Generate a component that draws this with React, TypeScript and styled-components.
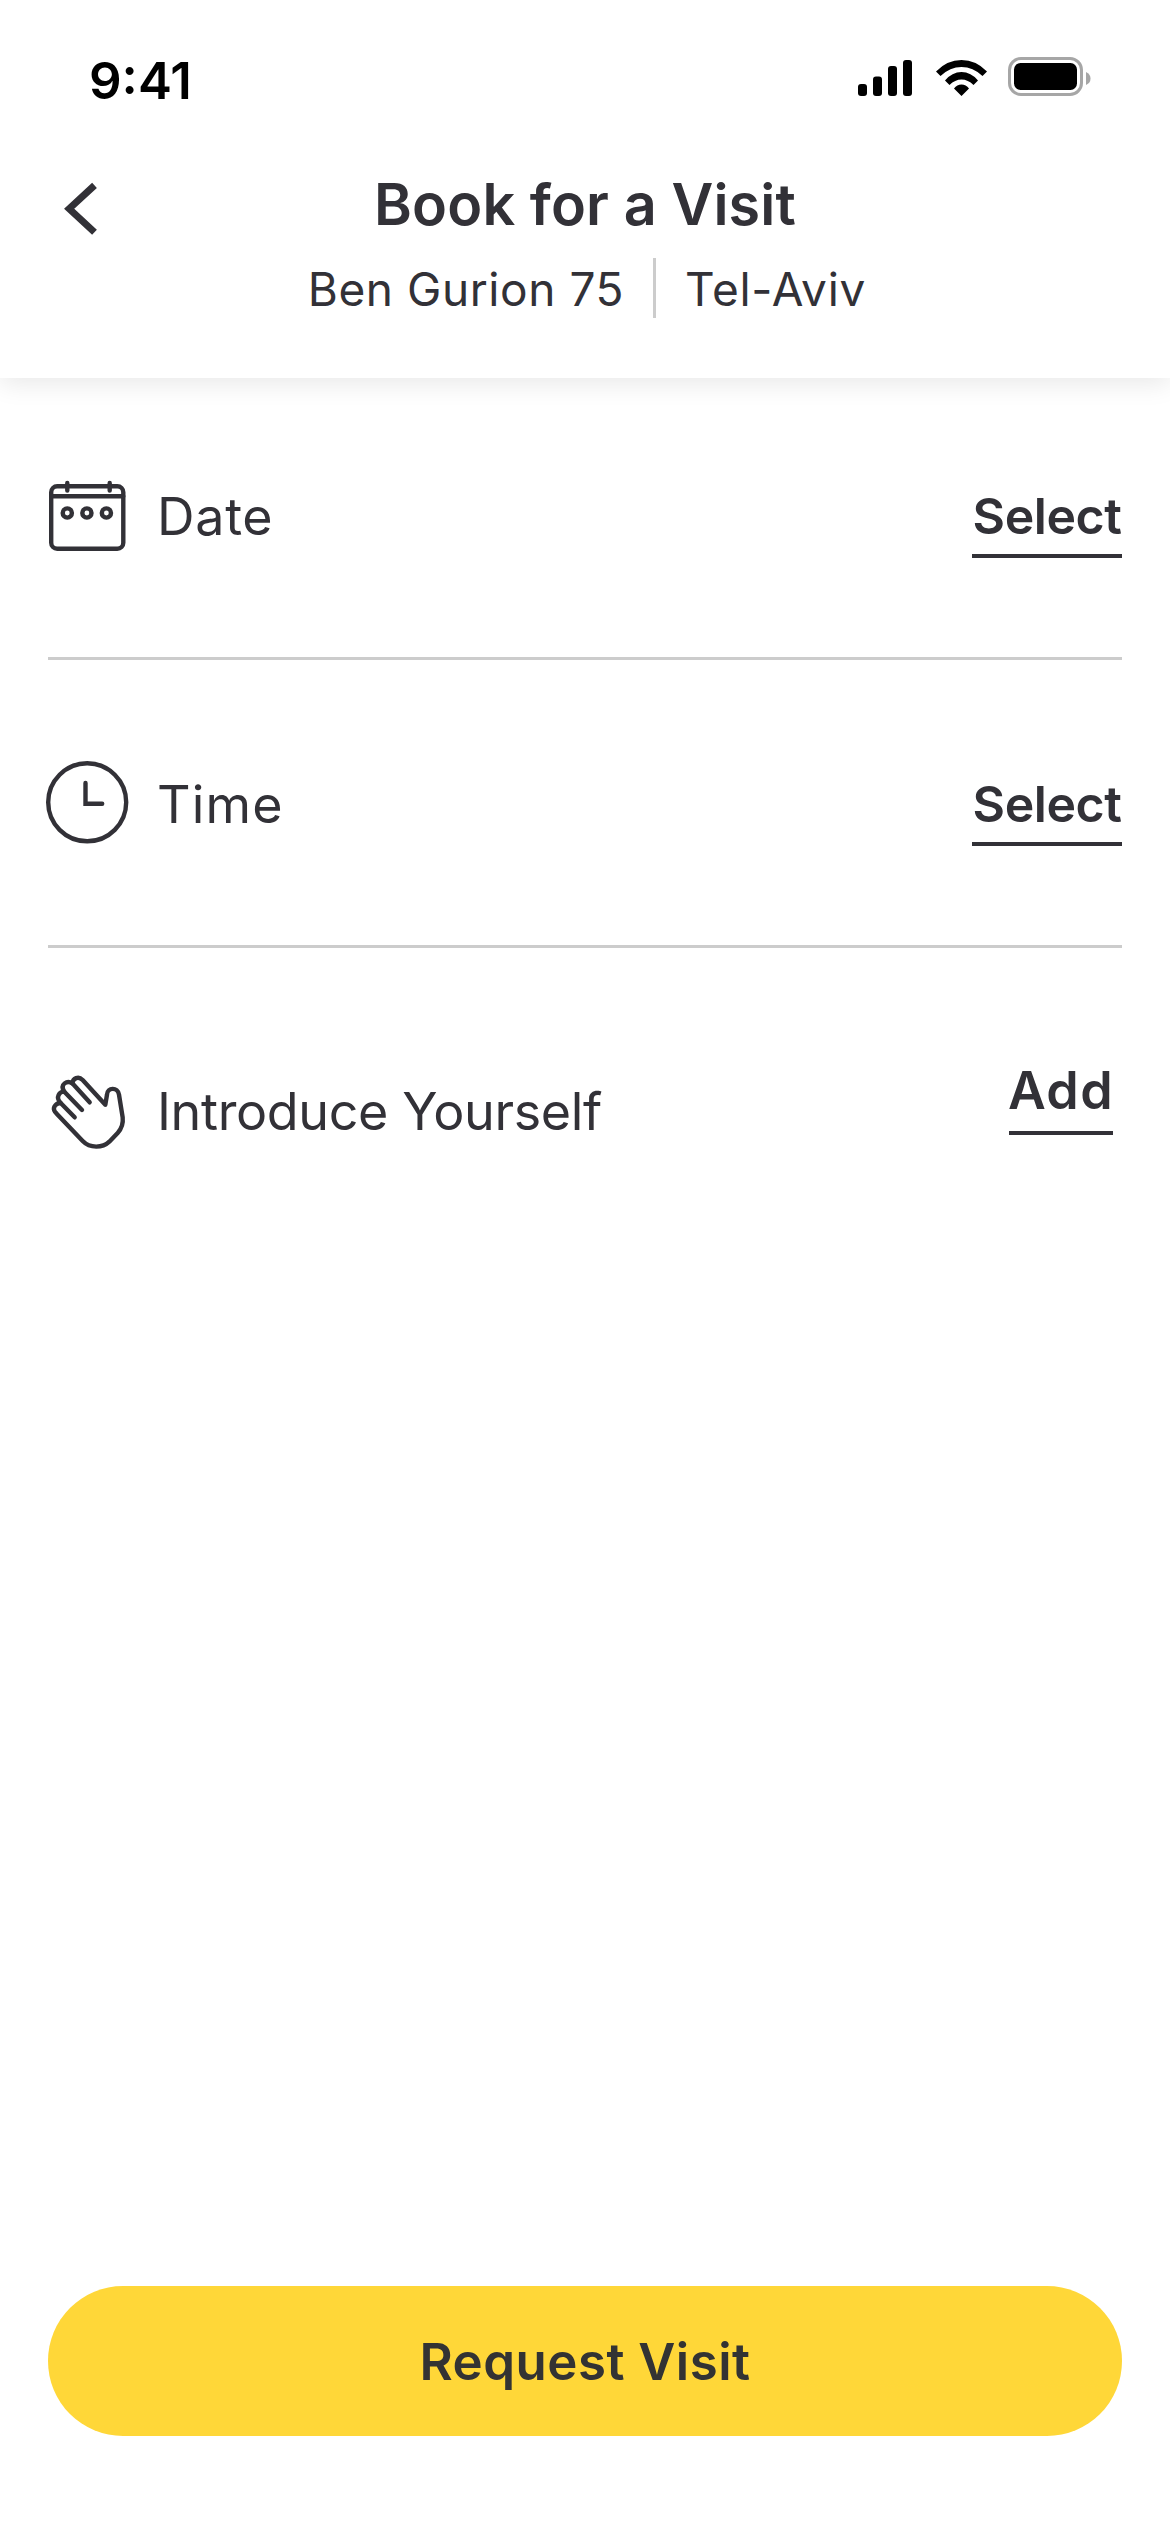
import React from "react";
import styled, { createGlobalStyle } from "styled-components";

const ink = "#323137";

const GlobalStyle = createGlobalStyle`
  * { box-sizing: border-box; }
  body { margin: 0; background: #fff; }
  button { border: 0; padding: 0; margin: 0; background: none; font: inherit; color: inherit; }
`;

const Screen = styled.div`
  width: 1170px;
  height: 2532px;
  display: flex;
  flex-direction: column;
  background: #fff;
  color: ${ink};
  font-family: Inter, "Liberation Sans", sans-serif;
  overflow: hidden;
`;

const Header = styled.header`
  height: 378px;
  flex: none;
  display: flex;
  flex-direction: column;
  background: #fff;
  box-shadow: 0 6px 24px rgba(0, 0, 0, 0.09);
`;

const StatusBar = styled.div`
  height: 132px;
  padding: 51px 79px 0 89px;
  display: flex;
  justify-content: space-between;
  align-items: flex-start;
  color: #000;
`;

const Clock = styled.span`
  font-size: 51px;
  line-height: 60px;
  font-weight: 600;
`;

const StatusIcons = styled.svg`
  display: block;
  margin-top: 6px;
`;

const TitleBar = styled.div`
  display: grid;
  grid-template-columns: 120px 1fr 120px;
  padding-top: 37px;
`;

const BackButton = styled.button`
  height: 79px;
  padding-left: 63px;
  display: flex;
  align-items: center;
`;

const Heading = styled.div`
  display: flex;
  flex-direction: column;
  align-items: center;
`;

const Title = styled.h1`
  margin: 0;
  font-size: 57.5px;
  line-height: 70px;
  font-weight: 600;
  letter-spacing: 0.13px;
`;

const Address = styled.div`
  margin-top: 19px;
  padding-left: 4px;
  height: 60px;
  display: flex;
  align-items: flex-start;
  gap: 29px;
  font-size: 46px;
  line-height: 62px;
  white-space: nowrap;
`;

const AddressPart = styled.span<{ $spacing: number }>`
  letter-spacing: ${(p) => p.$spacing}px;
`;

const AddressRule = styled.span`
  width: 3px;
  height: 60px;
  background: #ccc;
`;

const Rows = styled.main`
  flex: 1;
  padding: 0 48px;
`;

const Row = styled.section<{ $height: number; $last?: boolean }>`
  height: ${(p) => p.$height}px;
  display: flex;
  justify-content: space-between;
  border-bottom: ${(p) => (p.$last ? "0" : "3px solid #ccc")};
`;

const Label = styled.div<{ $top: number }>`
  height: 84px;
  margin: ${(p) => p.$top}px 0 0 -3px;
  display: flex;
  align-items: center;
  gap: 28px;
  font-size: 52px;
  line-height: 64px;
`;

const LabelText = styled.span<{ $spacing: number; $drop?: number }>`
  letter-spacing: ${(p) => p.$spacing}px;
  padding-top: ${(p) => p.$drop ?? 0}px;
`;

const Action = styled.button<{
  $top: number;
  $right?: number;
  $size: number;
  $width: number;
  $line: number;
  $spacing: number;
}>`
  align-self: flex-start;
  width: ${(p) => p.$width}px;
  height: 74px;
  margin-top: ${(p) => p.$top}px;
  margin-right: ${(p) => p.$right ?? 0}px;
  border-bottom: 4px solid ${ink};
  font-size: ${(p) => p.$size}px;
  line-height: ${(p) => p.$line}px;
  letter-spacing: ${(p) => p.$spacing}px;
  font-weight: 600;
  display: flex;
  justify-content: center;
  align-items: flex-start;
  white-space: nowrap;
`;

const Footer = styled.footer`
  padding: 0 48px 96px;
`;

const RequestButton = styled.button`
  width: 100%;
  height: 150px;
  padding-top: 1px;
  border-radius: 75px;
  background: #ffd738;
  color: #333;
  font-size: 51px;
  font-weight: 600;
  letter-spacing: 0.5px;
`;

const CalendarIcon = () => (
  <svg width="84" height="84" viewBox="0 0 84 84" fill="none" stroke={ink} strokeWidth="4.4" strokeLinecap="round">
    <rect x="6.2" y="12.2" width="72.1" height="62.6" rx="6" />
    <path d="M6.2 22.3h72.1M22.3 9v7.500M64.700 9v7.500" />
    <circle cx="22.3" cy="39" r="4.600" />
    <circle cx="41.900" cy="39" r="4.600" />
    <circle cx="61.400" cy="39" r="4.600" />
  </svg>
);

const TimeIcon = () => (
  <svg width="84" height="84" viewBox="0 0 84 84" fill="none" stroke={ink} strokeWidth="4.4" strokeLinecap="round">
    <circle cx="42.200" cy="42.300" r="39" />
    <path d="M40.500 23v20.800h16.700" />
  </svg>
);

const HandIcon = () => (
  <svg width="84" height="84" viewBox="15 18 252 252" fill="none" stroke={ink} strokeWidth="13.2" strokeLinecap="round" strokeLinejoin="round">
    <path d="M104 160L62 117C49 117 38 128 43 140C44 143 47 146 50 149L128 231C150 254 188 252 208 233L233 207C246 193 250 178 248 160L237 92C233 68 202 70 201 92L196 122L128 48C115 35 99 43 97 58L149 115" />
    <path d="M126 138L73 83C59 82 45 99 62 117" />
    <path d="M97 58C82 48 58 60 73 83" />
  </svg>
);

export default function App() {
  return (
    <Screen>
      <GlobalStyle />
      <Header>
        <StatusBar>
          <Clock>9:41</Clock>
          <StatusIcons width="233" height="39" viewBox="0 0 233 39">
            <rect x="0" y="27" width="9" height="12" rx="3" />
            <rect x="15" y="19.500" width="9" height="19.500" rx="3" />
            <rect x="30" y="9" width="9" height="30" rx="3" />
            <rect x="45" y="3" width="9" height="36" rx="3" />
            <path d="M78 14.500Q89 3 103.500 3T129 14.500L124.500 19Q115 10 103.500 10T82.500 19ZM87 23.500Q94 15 103.500 15T120 23.500L115.500 28Q110 22.500 103.500 22.500T91.500 28ZM96 31.500Q99 27.500 103.500 27.500T111 31.500L103.500 39Z" />
            <rect x="151.500" y="1.500" width="72" height="36" rx="11.500" fill="none" stroke="#a6a6a6" strokeWidth="3" />
            <rect x="156" y="6" width="63" height="27" rx="6.500" />
            <path d="M228 15Q232.500 17 232.500 21.500T228 28Z" fill="#a6a6a6" />
          </StatusIcons>
        </StatusBar>
        <TitleBar>
          <BackButton aria-label="Back">
            <svg width="36" height="54" viewBox="0 0 36 54" fill="none" stroke={ink} strokeWidth="7">
              <path d="M31.500 3.400L6.200 26.800L31.500 50.200" />
            </svg>
          </BackButton>
          <Heading>
            <Title>Book for a Visit</Title>
            <Address>
              <AddressPart $spacing={0.56}>Ben Gurion 75</AddressPart>
              <AddressRule />
              <AddressPart $spacing={0.75}>Tel-Aviv</AddressPart>
            </Address>
          </Heading>
        </TitleBar>
      </Header>
      <Rows>
        <Row $height={282}>
          <Label $top={96}>
            <CalendarIcon />
            <LabelText $spacing={0.7} $drop={2}>Date</LabelText>
          </Label>
          <Action $top={106} $size={50} $width={150} $line={64} $spacing={-0.45}>Select</Action>
        </Row>
        <Row $height={288}>
          <Label $top={100}>
            <TimeIcon />
            <LabelText $spacing={1.2} $drop={5}>Time</LabelText>
          </Label>
          <Action $top={112} $size={50} $width={150} $line={64} $spacing={-0.45}>Select</Action>
        </Row>
        <Row $height={300} $last>
          <Label $top={122}>
            <HandIcon />
            <LabelText $spacing={-0.35}>Introduce Yourself</LabelText>
          </Label>
          <Action $top={113} $right={9} $size={52} $width={104} $line={60} $spacing={1.4}>Add</Action>
        </Row>
      </Rows>
      <Footer>
        <RequestButton>Request Visit</RequestButton>
      </Footer>
    </Screen>
  );
}
